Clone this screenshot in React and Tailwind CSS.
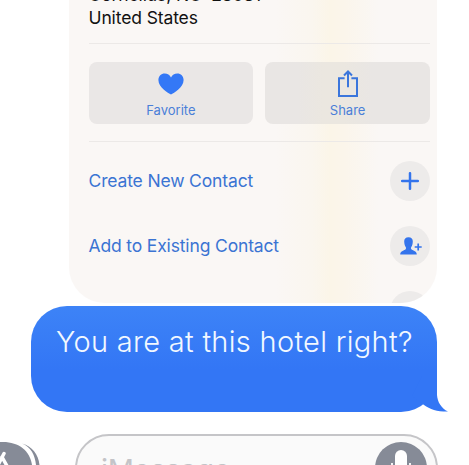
const HeartIcon = () => (
  <svg className="block" width="26" height="22" viewBox="0 0 26 22" fill="#3478f6">
    <path d="M13 21.6C10.2 20.2.4 14.6.4 7.1.4 3.2 3.2.5 6.7.5c2.8 0 5.1 1.5 6.3 3.9C14.2 2 16.5.5 19.3.5c3.5 0 6.3 2.7 6.3 6.6 0 7.5-9.8 13.1-12.6 14.5z" />
  </svg>
)

const ShareIcon = () => (
  <svg className="block" width="20" height="28" viewBox="0 0 20 28" fill="none" stroke="#3b76dc" strokeWidth="2">
    <path d="M6.6 8.2H1V26h18V8.2h-5.6" />
    <path d="M10 17.2V2M6 5.5l4-4 4 4" />
  </svg>
)

const PlusIcon = () => (
  <svg width="18" height="18" viewBox="0 0 18 18" stroke="#3474ec" strokeWidth="2.5" strokeLinecap="round">
    <path d="M9 1.2v15.6M1.2 9h15.6" />
  </svg>
)

const AddPersonIcon = () => (
  <svg className="ml-0.5" width="22" height="18" viewBox="0 0 22 18" fill="#3474ec">
    <path d="M8.5.2c2.9 0 4.4 1.7 4.3 4.4-.1 2.4-.6 4.3-1.5 5.4-.4.6-.4 1.7.1 2.3.9 1.3 5.4 1.5 5.4 5.2H.2c0-3.7 4.5-3.9 5.4-5.2.5-.6.5-1.700.1-2.300-.9-1.100-1.400-3-1.500-5.400C4.100 1.900 5.600.2 8.500.2z" />
    <path d="M18.200 6.500v7M14.700 10h7" stroke="#3474ec" strokeWidth="1.700" />
  </svg>
)

const ContactAction = ({ label, children }) => (
  <div className="flex h-[65px] items-center justify-between">
    <span className="text-[17.5px] tracking-[-0.15px] text-[#3b74d3]">{label}</span>
    <div className="flex size-10 items-center justify-center rounded-full bg-[#edebea]">{children}</div>
  </div>
)

const ContactCard = () => (
  <div className="ml-[69px] h-[303px] w-[368px] shrink-0 overflow-hidden rounded-b-[36px] bg-[#faf7f5] bg-[linear-gradient(90deg,transparent_56%,#faf6ef_66%,#fbf5e8_71%,#fbf5eb_75%,transparent_84%)] pr-[7px] pl-[19.5px]">
    <div className="-mt-[17.5px] text-[17.5px] leading-[23px] tracking-[-0.12px] text-[#111]">
      <p>Cornelius, NC&nbsp; 28031</p>
      <p>United States</p>
    </div>

    <div className="mt-[14px] h-px bg-[#ece9e7]" />

    <div className="mt-[18.5px] flex gap-3">
      <div className="flex h-[62px] flex-1 flex-col items-center rounded-lg bg-[#eae7e6] pt-[11px]">
        <HeartIcon />
        <span className="mt-[6px] text-[13px] leading-[18px] text-[#4a7fd8]">Favorite</span>
      </div>
      <div className="flex h-[62px] flex-1 flex-col items-center rounded-lg bg-[#e9e6e4] bg-[linear-gradient(90deg,transparent_20%,#ebe7e0_35%,#ebe7e0_48%,transparent_65%)] pt-2">
        <ShareIcon />
        <span className="mt-[3px] text-[13px] leading-[18px] text-[#4a7fd8]">Share</span>
      </div>
    </div>

    <div className="mt-[17px] h-px bg-[#ece9e7]" />

    <div className="mt-[6.5px]">
      <ContactAction label="Create New Contact">
        <PlusIcon />
      </ContactAction>
      <ContactAction label="Add to Existing Contact">
        <AddPersonIcon />
      </ContactAction>
      <ContactAction />
    </div>
  </div>
)

const MessageBubble = () => (
  <div className="relative mt-[3px] ml-[31px] h-[105.5px] w-[406px] shrink-0 rounded-[36px] bg-linear-to-b from-[#3d83f7] to-[#3376f5] to-60% pt-[16px] pl-[25px]">
    <p className="text-[29px] leading-[40px] font-[330] tracking-[0.3px] whitespace-nowrap text-[#f2f8ff]">You are at this hotel right?</p>
    <svg className="absolute -right-[11px] bottom-0" width="36" height="36" viewBox="0 0 36 36" fill="#3376f5">
      <path d="M10 0H25v19C25.500 26 29 32 36 35.600 26 35.800 18 33.500 12 29L0 20z" />
    </svg>
  </div>
)

const AppsButton = () => (
  <svg className="shrink-0" width="44" height="31" viewBox="0 0 44 31">
    <path d="M0 8h3c16 0 27 9 29 23H0z" fill="#868b97" />
    <path d="M22 9.500C31 13 35 21 36 31h3.500C38.500 20 32 12.500 22 9.500z" fill="#868b97" />
    <path d="M4 19.500L-2 31M2 23l5 9" stroke="#fff" strokeWidth="3.500" strokeLinecap="round" />
  </svg>
)

const MicIcon = () => (
  <svg width="52" height="52" viewBox="0 0 52 52">
    <circle cx="26" cy="26" r="26" fill="#868b97" />
    <rect x="20" y="8" width="12" height="25" rx="6" fill="#fff" />
    <path d="M17 21v6a9 9 0 0018 0v-6" fill="none" stroke="#fff" strokeWidth="1.800" />
  </svg>
)

const InputBar = () => (
  <div className="mt-[22.5px] flex shrink-0 items-start">
    <AppsButton />
    <div className="ml-[31px] flex h-[68px] w-[363px] items-start justify-between rounded-[36px] border-2 border-[#c5c5c8] bg-[#fafafa] pt-[6px] pr-[9px] pl-[24px]">
      <span className="mt-[8px] text-[29px] leading-[40px] tracking-[-0.3px] text-[#c4c4c8]">iMessage</span>
      <MicIcon />
    </div>
  </div>
)

export default function App() {
  return (
    <div className="flex h-[465px] w-[469px] flex-col overflow-hidden bg-white font-['Inter','Liberation_Sans',sans-serif]">
      <ContactCard />
      <MessageBubble />
      <InputBar />
    </div>
  )
}
